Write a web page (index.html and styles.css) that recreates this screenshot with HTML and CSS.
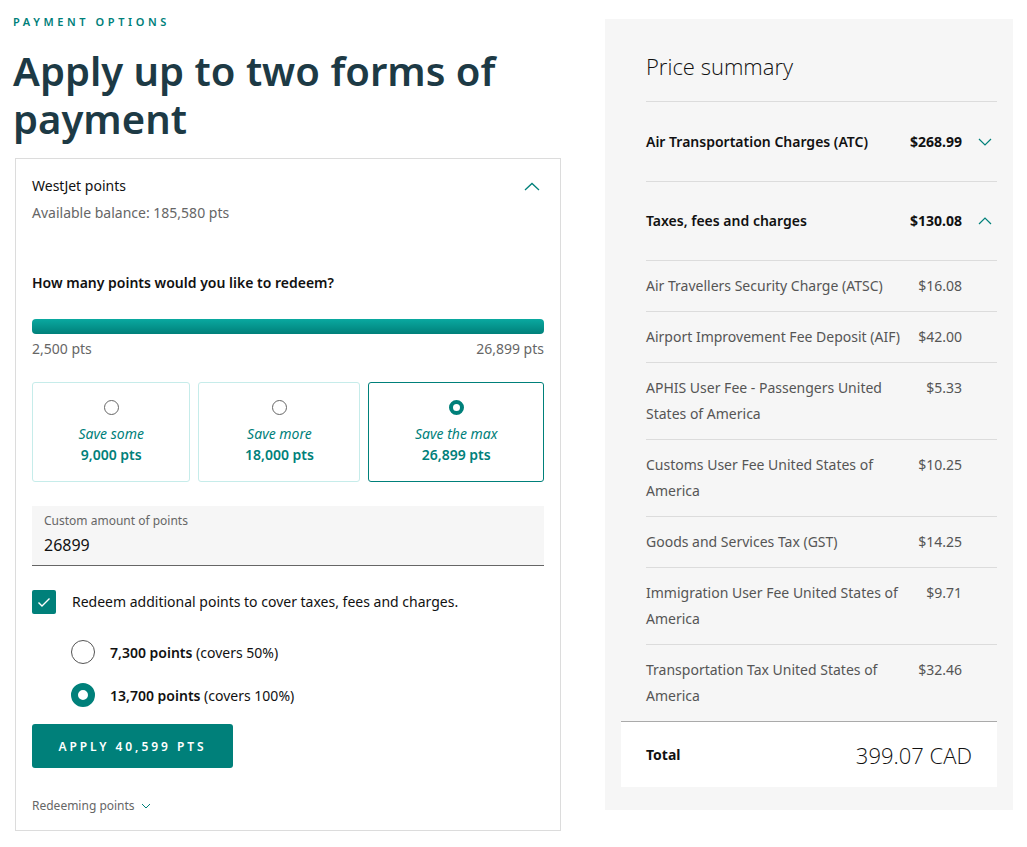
FILE: index.html
```html
<!DOCTYPE html>
<html lang="en">
<head>
<meta charset="utf-8">
<title>Payment options</title>
<link rel="stylesheet" href="styles.css">
</head>
<body>
<div class="page">
  <main class="left">
    <div class="eyebrow">PAYMENT OPTIONS</div>
    <h1 class="title">Apply up to two forms of payment</h1>
    <section class="card">
      <div class="card-head">
        <div>
          <div class="card-title">WestJet points</div>
          <div class="balance">Available balance: 185,580 pts</div>
        </div>
        <svg class="chev-up" width="16" height="9" viewBox="0 0 16 9"><path d="M1 8 L8 1.5 L15 8" fill="none" stroke="#00807a" stroke-width="1.3"/></svg>
      </div>
      <div class="question">How many points would you like to redeem?</div>
      <div class="slider"></div>
      <div class="range"><span>2,500 pts</span><span>26,899 pts</span></div>
      <div class="options">
        <div class="opt">
          <span class="dot"></span>
          <span class="opt-name">Save some</span>
          <span class="opt-pts">9,000 pts</span>
        </div>
        <div class="opt">
          <span class="dot"></span>
          <span class="opt-name">Save more</span>
          <span class="opt-pts">18,000 pts</span>
        </div>
        <div class="opt opt-sel">
          <span class="dot dot-sel"></span>
          <span class="opt-name">Save the max</span>
          <span class="opt-pts">26,899 pts</span>
        </div>
      </div>
      <div class="field">
        <div class="field-label">Custom amount of points</div>
        <div class="field-value">26899</div>
      </div>
      <div class="check-row">
        <span class="checkbox"><svg width="14" height="11" viewBox="0 0 14 11"><path d="M1.5 5.5 L5 9 L12.5 1.5" fill="none" stroke="#fff" stroke-width="1.4"/></svg></span>
        <span class="check-text">Redeem additional points to cover taxes, fees and charges.</span>
      </div>
      <div class="radios">
        <div class="radio-row"><span class="radio"></span><span><b>7,300 points</b> (covers 50%)</span></div>
        <div class="radio-row"><span class="radio radio-sel"></span><span><b>13,700 points</b> (covers 100%)</span></div>
      </div>
      <button class="apply">APPLY 40,599 PTS</button>
      <div class="redeeming">Redeeming points <svg width="10" height="6" viewBox="0 0 10 6"><path d="M1 1 L5 5 L9 1" fill="none" stroke="#00807a" stroke-width="1"/></svg></div>
    </section>
  </main>
  <aside class="summary">
    <div class="summary-inner">
      <h2 class="summary-title">Price summary</h2>
      <div class="group-row">
        <span>Air Transportation Charges (ATC)</span>
        <span class="amt">$268.99</span>
        <svg width="14" height="8" viewBox="0 0 14 8"><path d="M1 1 L7 7 L13 1" fill="none" stroke="#00807a" stroke-width="1.2"/></svg>
      </div>
      <div class="group-row group-open">
        <span>Taxes, fees and charges</span>
        <span class="amt">$130.08</span>
        <svg width="14" height="8" viewBox="0 0 14 8"><path d="M1 7 L7 1 L13 7" fill="none" stroke="#00807a" stroke-width="1.2"/></svg>
      </div>
      <div class="item"><span>Air Travellers Security Charge (ATSC)</span><span class="amt">$16.08</span></div>
      <div class="item"><span>Airport Improvement Fee Deposit (AIF)</span><span class="amt">$42.00</span></div>
      <div class="item"><span>APHIS User Fee - Passengers United States of America</span><span class="amt">$5.33</span></div>
      <div class="item"><span>Customs User Fee United States of America</span><span class="amt">$10.25</span></div>
      <div class="item"><span>Goods and Services Tax (GST)</span><span class="amt">$14.25</span></div>
      <div class="item"><span>Immigration User Fee United States of America</span><span class="amt">$9.71</span></div>
      <div class="item item-last"><span>Transportation Tax United States of America</span><span class="amt">$32.46</span></div>
    </div>
    <div class="total">
      <span class="total-label">Total</span>
      <span class="total-amt">399.07 CAD</span>
    </div>
  </aside>
</div>
</body>
</html>
```
FILE: styles.css
```css
* { box-sizing: border-box; }
html, body { margin: 0; padding: 0; background: #fff; }
body {
  font-family: "Noto Sans", "Open Sans", "Liberation Sans", sans-serif;
  color: #111;
  font-size: 14px;
}
b { font-weight: 600; }
.page {
  display: flex;
  align-items: flex-start;
  gap: 44px;
  padding: 14px 14px 0 13px;
}
.left { width: 548px; flex: none; }
.eyebrow {
  font-size: 11px;
  line-height: 16px;
  font-weight: 600;
  letter-spacing: 3.6px;
  color: #00807a;
}
.title {
  margin: 17px 0 15px;
  font-size: 40px;
  line-height: 48px;
  font-weight: 600;
  color: #1d3a45;
}
.card {
  margin-left: 2px;
  width: 546px;
  border: 1px solid #dcdcdc;
  padding: 16px 16px 15px;
}
.card-head {
  display: flex;
  justify-content: space-between;
  align-items: flex-start;
}
.chev-up { margin-top: 7px; margin-right: 4px; }
.card-title { font-size: 14px; line-height: 22px; color: #111; }
.balance { margin-top: 5px; font-size: 14px; line-height: 22px; color: #666; }
.question { margin-top: 48px; font-size: 14px; line-height: 21px; font-weight: 600; color: #111; }
.slider {
  margin-top: 26px;
  height: 15px;
  border-radius: 4px;
  background: linear-gradient(#0aa9a0, #00807a);
}
.range {
  margin-top: 4px;
  display: flex;
  justify-content: space-between;
  font-size: 14px;
  line-height: 21px;
  color: #666;
}
.options {
  margin-top: 23px;
  display: flex;
  gap: 8px;
}
.opt {
  flex: 1 1 auto;
  height: 100px;
  border: 1px solid #c6ecea;
  border-radius: 3px;
  display: flex;
  flex-direction: column;
  align-items: center;
  padding-top: 17px;
  color: #00807a;
}
.opt-sel { border-color: #00807a; }
.dot {
  width: 15px; height: 15px;
  border-radius: 50%;
  border: 1px solid #666;
  margin-bottom: 8px;
}
.dot-sel { border: 4px solid #00807a; background: #fff; }
.opt-name { font-style: italic; font-size: 14px; line-height: 21px; }
.opt-pts { font-weight: 600; font-size: 14px; line-height: 21px; }
.field {
  margin-top: 24px;
  height: 60px;
  background: #f6f6f6;
  border-bottom: 1px solid #666;
  padding: 6px 12px 0;
}
.field-label { font-size: 12px; line-height: 18px; color: #666; }
.field-value { margin-top: 3px; font-size: 16px; line-height: 24px; color: #111; }
.check-row {
  margin-top: 24px;
  display: flex;
  align-items: center;
  gap: 16px;
}
.checkbox {
  width: 24px; height: 24px;
  border-radius: 2px;
  background: #00807a;
  display: flex;
  align-items: center;
  justify-content: center;
}
.check-text { font-size: 14px; line-height: 21px; color: #111; margin-top: -2px; }
.radios { margin-top: 26px; padding-left: 39px; display: flex; flex-direction: column; gap: 19px; }
.radio-row { display: flex; align-items: center; gap: 15px; font-size: 14px; line-height: 21px; color: #111; }
.radio {
  width: 24px; height: 24px;
  border-radius: 50%;
  border: 1px solid #555;
  flex: none;
}
.radio-sel { border: 7px solid #00807a; }
.apply {
  display: block;
  margin-top: 17px;
  width: 201px;
  height: 44px;
  border: none;
  border-radius: 3px;
  background: #00807a;
  color: #fff;
  font-family: inherit;
  font-size: 12px;
  font-weight: 600;
  letter-spacing: 2.95px;
  padding: 0;
}
.redeeming {
  margin-top: 29px;
  font-size: 12px;
  line-height: 18px;
  color: #666;
  display: flex;
  align-items: center;
  gap: 6px;
}
.summary {
  margin-top: 5px;
  width: 408px;
  flex: none;
  background: #f6f6f6;
  padding: 0 16px 23px;
}
.summary-inner { padding-left: 25px; }
.summary-title {
  margin: 0;
  padding: 32px 0 20px;
  font-size: 22px;
  line-height: 30px;
  font-weight: 300;
  font-family: "Open Sans", "Noto Sans", sans-serif;
  color: #111;
  border-bottom: 1px solid #dcdcdc;
}
.group-row {
  display: grid;
  grid-template-columns: 1fr auto 14px;
  column-gap: 16px;
  align-items: center;
  padding: 29px 5px 29px 0;
  font-size: 14px;
  line-height: 21px;
  font-weight: 600;
  color: #111;
  border-bottom: 1px solid #dcdcdc;
}
.group-row .amt { font-weight: 700; }
.group-open { padding: 28px 5px 29px 0; }
.item {
  display: grid;
  grid-template-columns: 1fr auto;
  column-gap: 16px;
  padding: 12px 35px 12px 0;
  font-size: 14px;
  line-height: 26px;
  color: #555;
  border-bottom: 1px solid #dcdcdc;
}
.item .amt { text-align: right; }
.item-last { border-bottom: none; }
.total {
  display: flex;
  justify-content: space-between;
  align-items: center;
  height: 66px;
  background: #fff;
  border-top: 1px solid #aaa;
  padding: 0 25px;
}
.total-label { font-size: 14px; font-weight: 700; color: #111; }
.total-amt {
  font-family: "Open Sans", "Noto Sans", sans-serif;
  font-weight: 300;
  font-size: 22px;
  color: #111;
}
```
